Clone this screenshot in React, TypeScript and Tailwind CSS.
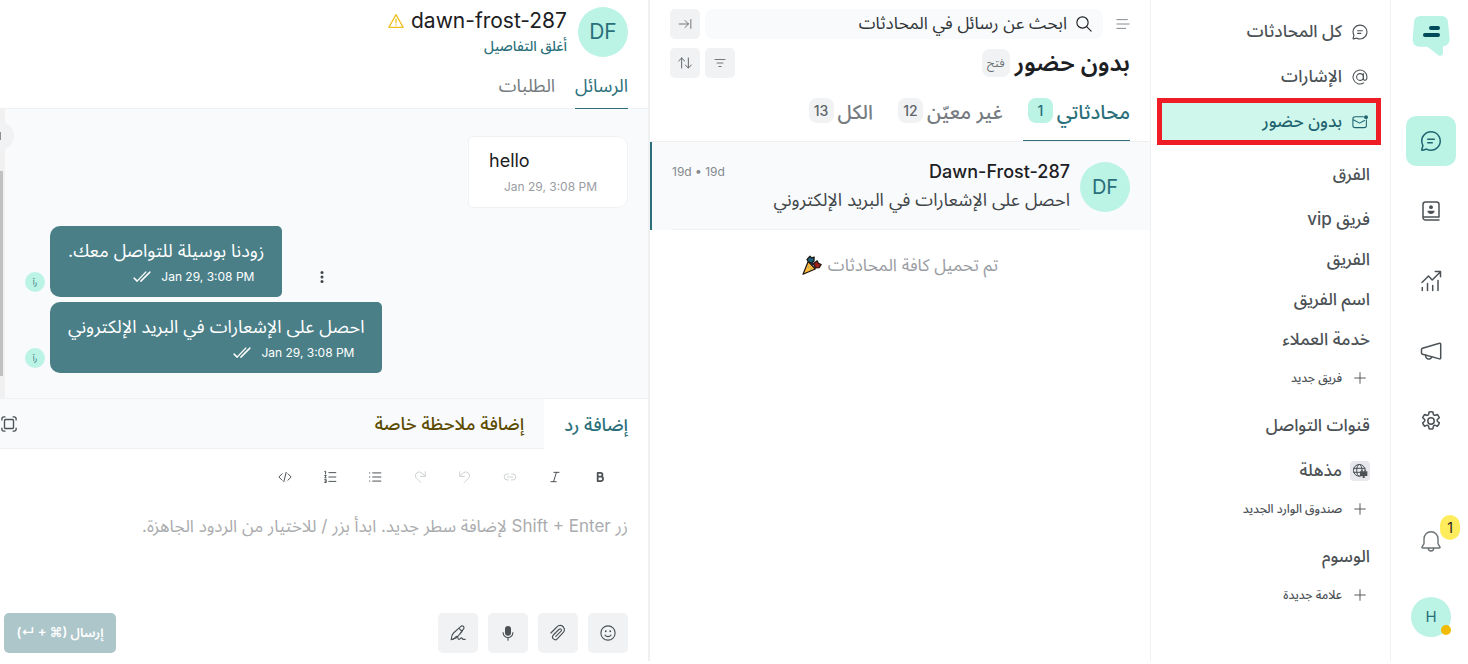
import type { ReactNode } from 'react';

type IconProps = { children: ReactNode; size?: string; className?: string; stroke?: string };

function Line({ children, size = 'size-5', className = '', stroke = '1.5' }: IconProps) {
  return (
    <svg
      viewBox="0 0 24 24"
      className={`${size} shrink-0 ${className}`}
      fill="none"
      stroke="currentColor"
      strokeWidth={stroke}
      strokeLinecap="round"
      strokeLinejoin="round"
      aria-hidden="true"
    >
      {children}
    </svg>
  );
}

function ChatIcon({ size }: { size: string }) {
  return (
    <svg viewBox="0 0 24 24" className={`${size} shrink-0`} fill="currentColor" aria-hidden="true">
      <path d="M12 2c5.523 0 10 4.477 10 10s-4.477 10-10 10a9.96 9.96 0 0 1-4.587-1.112l-3.826 1.067a1.25 1.25 0 0 1-1.54-1.54l1.068-3.823A9.96 9.96 0 0 1 2 12C2 6.477 6.477 2 12 2Zm0 1.5A8.5 8.5 0 0 0 3.5 12c0 1.47.373 2.883 1.073 4.137l.15.27-1.112 3.984 3.987-1.112.27.15A8.5 8.5 0 1 0 12 3.5ZM8.75 13h4.498a.75.75 0 0 1 .102 1.493l-.102.007H8.75a.75.75 0 0 1-.102-1.493L8.75 13Zm0-3.5h6.505a.75.75 0 0 1 .101 1.493l-.101.007H8.75a.75.75 0 0 1-.102-1.493L8.75 9.5Z" />
    </svg>
  );
}

function Logo() {
  return (
    <svg viewBox="0 0 38 42" className="h-[42px] w-[38px]" aria-hidden="true">
      <path
        d="M9 1h20c4.4 0 6.6 2.2 7 6.3l1.6 16c.4 4.5-2.1 7.6-6.6 8.2v6.2c0 3-2.8 4-5 2.2L15.5 31.7H8c-5 0-7.7-3-7.3-8L2 7.3C2.4 3.2 4.600 1 9 1Z"
        fill="#bbf3e5"
      />
      <rect x="17" y="11" width="11" height="4" rx="2" fill="#004b59" />
      <rect x="11" y="18" width="17" height="4" rx="2" fill="#004b59" />
    </svg>
  );
}

function PartyPopper() {
  return (
    <svg viewBox="0 0 20 20" className="size-5" role="img" aria-label="🎉" stroke="#1c1410" strokeWidth="1.2" strokeLinejoin="round">
      <path d="M6.200 6.500 1 19.300 13.300 14Z" fill="#fdb93a" />
      <path d="M5 4.500 8 1.200l1.500 1.600 2.700-.8-.2 4-2.500 2.200-3.200-1.500Z" fill="#1a6076" />
      <path d="m11.500 8.500 3.700-2.700 1.200 2.400 2.800 1.300-2 3.200-3.900.3Z" fill="#9d2018" />
      <path d="m9.500 7.500 2 2.700" fill="none" stroke="#2b2238" strokeWidth="2.2" />
      <circle cx="6.500" cy="12" r=".6" fill="#2aa5b5" stroke="none" />
      <circle cx="9" cy="14" r=".6" fill="#2aa5b5" stroke="none" />
    </svg>
  );
}

const book = (
  <Line size="size-6">
    <path d="M20 21H6.5A2.5 2.5 0 0 1 4 18.500v-13A2.5 2.5 0 0 1 6.500 3h11A2.5 2.5 0 0 1 20 5.500V18H4.600" />
    <circle cx="12" cy="8.2" r="1.9" fill="currentColor" stroke="none" />
    <path d="M8.500 11.700h7v.6c0 1.500-1.500 2.600-3.500 2.600s-3.500-1.100-3.500-2.600Z" fill="currentColor" stroke="none" />
  </Line>
);

const chart = (
  <Line size="size-6">
    <path d="M3 13.500 9.500 7l3.700 4L21 3.200M16.300 2.500H21.500V7.700M3.300 18.500v3M8.500 14.500v7M13.700 16.500v5M19 11.500v10" />
  </Line>
);

const megaphone = (
  <Line size="size-6">
    <path d="M21.700 5v14a.9.9 0 0 1-1.100.9L3.500 15.200a1.300 1.300 0 0 1-1-1.200v-3.400c0-.6.400-1.100 1-1.300l17-5.100a.9.9 0 0 1 1.200.8Z" />
    <path d="M6.800 16.200a3 3 0 0 0 6 1.500" />
  </Line>
);

const gear = (
  <Line size="size-6">
    <circle cx="12" cy="12" r="3.2" />
    <path d="M12 2.800c.7 0 1.300.1 1.900.2l.4 2c.2 1 1.200 1.500 2.100 1.200l2-.8a9 9 0 0 1 1.900 3.300l-1.600 1.400a1.500 1.500 0 0 0 0 2.400l1.600 1.400a9 9 0 0 1-1.900 3.300l-2-.8c-.9-.3-1.900.2-2.100 1.200l-.4 2.100a9 9 0 0 1-3.800 0l-.4-2.100c-.2-1-1.200-1.500-2.100-1.200l-2 .8a9 9 0 0 1-1.900-3.300l1.600-1.400a1.500 1.500 0 0 0 0-2.400L3.700 8.700a9 9 0 0 1 1.900-3.300l2 .8c.9.300 1.900-.2 2.100-1.200l.4-2c.6-.1 1.200-.2 1.900-.2Z" />
  </Line>
);

const bell = (
  <Line size="size-6" stroke="1.4">
    <path d="M12 2.700a7 7 0 0 0-7 7v5L3 18.200c-.2.500.1.800.6.800h16.800c.5 0 .8-.3.600-.8L19 14.700v-5a7 7 0 0 0-7-7ZM9.300 19.300a2.700 2.700 0 0 0 5.400 0" />
  </Line>
);

const at = (
  <Line size="size-[18px]" stroke="1.4">
    <circle cx="12" cy="12" r="4.5" />
    <path d="M16.500 7.500v6c0 1.800 1 2.800 2.400 2.800 1.700 0 2.400-1.600 2.400-4.300A9.300 9.300 0 1 0 17 19.900" />
  </Line>
);

const mail = (
  <Line size="size-[18px]" stroke="1.4">
    <path d="M16.500 5H5.500A3 3 0 0 0 2.500 8v8.500a3 3 0 0 0 3 3h12a3 3 0 0 0 3-3V9M3 9l8.500 4.500L18 10" />
    <circle cx="20" cy="5.5" r="2.6" fill="currentColor" stroke="none" />
  </Line>
);

const plus = (
  <Line size="size-4" stroke="1.4">
    <path d="M12 4v16M4 12h16" />
  </Line>
);

const globe = (
  <Line size="size-4" stroke="1.5">
    <circle cx="11" cy="11" r="8.8" />
    <ellipse cx="11" cy="11" rx="4" ry="8.8" />
    <path d="M2.500 8h17M2.500 14h9" />
    <path d="M12 12.500h11v7h-4v3h-3v-3h-4Z" fill="currentColor" stroke="none" />
  </Line>
);

function RailLink({ label, active, children }: { label: string; active?: boolean; children: ReactNode }) {
  return (
    <a
      href="#"
      aria-label={label}
      className={`flex size-[50px] items-center justify-center rounded-[10px] ${active ? 'bg-[#bbf3e5] text-[#1f6470]' : 'text-[#4b5155]'}`}
    >
      {children}
    </a>
  );
}

function SideRow({ icon, children, active }: { icon: ReactNode; children: ReactNode; active?: boolean }) {
  return (
    <a
      href="#"
      className={`flex h-10 items-center gap-2 rounded-[5px] pt-px pr-[10px] text-[17px] font-medium ${active ? 'bg-[#cff7ec] text-[#1f6470]' : 'text-[#4b5155]'}`}
    >
      <span className="flex w-5 justify-center">{icon}</span>
      {children}
    </a>
  );
}

function SideHeading({ children }: { children: ReactNode }) {
  return <h3 className="mt-2 flex h-10 items-center pt-px pr-[10px] text-[17px] font-medium text-[#4b5155]">{children}</h3>;
}

function AddRow({ children }: { children: ReactNode }) {
  return (
    <button type="button" className="flex h-[38px] w-full items-center gap-2 pr-[10px] text-[12px] font-medium text-[#4b5155]">
      <span className="flex w-5 justify-center">{plus}</span>
      {children}
    </button>
  );
}

function Rail() {
  return (
    <nav className="flex w-[78px] shrink-0 flex-col items-start border-l border-[#eff0f2] pr-3">
      <a href="#" aria-label="الرئيسية" className="flex h-[72px] w-[50px] items-center justify-center">
        <Logo />
      </a>
      <div className="mt-11 flex flex-col gap-5">
        <RailLink label="المحادثات" active>
          <ChatIcon size="size-6" />
        </RailLink>
        <RailLink label="جهات الاتصال">{book}</RailLink>
        <RailLink label="التقارير">{chart}</RailLink>
        <RailLink label="الحملات">{megaphone}</RailLink>
        <RailLink label="الإعدادات">{gear}</RailLink>
      </div>
      <div className="mt-auto flex flex-col items-center gap-[31px] pb-6">
        <a href="#" aria-label="الإشعارات" className="relative flex size-[50px] items-center justify-center text-[#6b7276]">
          {bell}
          <span className="absolute -top-px -right-1 flex h-[25px] w-5 items-center justify-center rounded-full bg-[#ffec5c] text-[14px] text-[#1c2023]">
            1
          </span>
        </a>
        <button type="button" aria-label="الملف الشخصي" className="relative flex size-10 items-center justify-center rounded-full bg-[#bbf3e5] text-[15px] text-[#2a6f7a]">
          H
          <span className="absolute right-0 bottom-0.5 size-[10px] rounded-full bg-[#f0bb00]" />
        </button>
      </div>
    </nav>
  );
}

function SidePanel() {
  return (
    <aside className="w-60 shrink-0 border-l border-[#eff0f2] px-[10px] pt-[11px]">
      <div className="flex flex-col gap-[5px]">
        <SideRow icon={<ChatIcon size="size-[18px]" />}>كل المحادثات</SideRow>
        <SideRow icon={at}>الإشارات</SideRow>
        <div className="relative">
          <SideRow icon={mail} active>
            بدون حضور
          </SideRow>
          <span className="pointer-events-none absolute -top-[3px] -right-px -left-1 h-[47px] border-[5px] border-[#ee1c25]" />
        </div>
      </div>
      <div className="pt-[5px]">
        <SideHeading>الفرق</SideHeading>
        <ul className="pt-[5px]">
          {['فريق vip', 'الفريق', 'اسم الفريق', 'خدمة العملاء'].map((team) => (
            <li key={team}>
              <a href="#" className="flex h-10 items-center pt-px pr-[10px] text-[17px] font-medium text-[#4b5155]">
                {team}
              </a>
            </li>
          ))}
        </ul>
        <AddRow>فريق جديد</AddRow>
      </div>
      <SideHeading>قنوات التواصل</SideHeading>
      <div className="pt-[5px]">
        <SideRow icon={<span className="flex size-5 items-center justify-center rounded-sm bg-[#e6e8eb]">{globe}</span>}>مذهلة</SideRow>
        <AddRow>صندوق الوارد الجديد</AddRow>
      </div>
      <SideHeading>الوسوم</SideHeading>
      <AddRow>علامة جديدة</AddRow>
    </aside>
  );
}

function SquareButton({ label, children }: { label: string; children: ReactNode }) {
  return (
    <button type="button" aria-label={label} className="flex size-[30px] shrink-0 items-center justify-center rounded-[5px] bg-[#f1f2f4] text-[#5f666a]">
      {children}
    </button>
  );
}

function ListTab({ label, count, active }: { label: string; count: string; active?: boolean }) {
  return (
    <button
      type="button"
      className={`flex h-[62px] items-center gap-1 border-b pt-[2px] pl-[5px] text-[20px] font-medium ${active ? 'border-[#2a6f7a] text-[#2a6f7a]' : 'border-transparent text-[#757b80]'}`}
    >
      <span className="pt-[3px]">{label}</span>
      <span className={`flex size-[25px] items-center justify-center rounded-lg text-[14px] ${active ? 'bg-[#bbf3e5]' : 'bg-[#f1f2f4] text-[#5f666a]'}`}>
        {count}
      </span>
    </button>
  );
}

function ChatList() {
  return (
    <section className="w-[500px] shrink-0">
      <header className="flex items-center gap-[5px] px-5 pt-[9px]">
        <button type="button" aria-label="القائمة" className="ml-2 text-[#757b80]">
          <Line size="size-[14px]">
            <path d="M1.500 4.500h18M1.500 12h21M1.500 19.500h15" />
          </Line>
        </button>
        <label className="flex h-[30px] flex-1 items-center gap-2 rounded-lg bg-[#f8fafc] px-[10px] text-[#1c2023]">
          <Line size="size-[18px]">
            <circle cx="10" cy="10" r="7.5" />
            <path d="m15.500 15.500 6 6" />
          </Line>
          <input
            type="text"
            aria-label="بحث"
            placeholder="ابحث عن رسائل في المحادثات"
            className="min-w-0 flex-1 bg-transparent text-[17px] outline-none placeholder:text-[#2f3437]"
          />
        </label>
        <SquareButton label="طي">
          <Line size="size-[14px]">
            <path d="M2 12h16M12 6l6 6-6 6M22 4.500v15" />
          </Line>
        </SquareButton>
      </header>
      <div className="flex items-center gap-[5px] px-5 pt-2">
        <h1 className="text-[24px] leading-8 font-semibold text-[#1c2023]">بدون حضور</h1>
        <span className="flex size-7 items-center justify-center rounded-lg bg-[#f1f2f4] text-[12px] text-[#6b7276]">فتح</span>
        <div className="mr-auto flex gap-[5px]">
          <SquareButton label="تصفية">
            <Line size="size-[14px]">
              <path d="M3.500 6h17M7 12h10M10 18h4" />
            </Line>
          </SquareButton>
          <SquareButton label="ترتيب">
            <Line size="size-4">
              <path d="M7 19.500v-15M2.500 9 7 4.500 11.500 9M17 4.500v15M12.500 15l4.500 4.500 4.500-4.500" />
            </Line>
          </SquareButton>
        </div>
      </div>
      <div className="flex gap-5 border-b border-[#eff0f2] pr-5">
        <ListTab label="محادثاتي" count="1" active />
        <ListTab label="غير معيّن" count="12" />
        <ListTab label="الكل" count="13" />
      </div>
      <a href="#" className="flex h-[88px] border-l-2 border-[#2a6f7a] bg-[#f8fafc] px-5">
        <span className="mt-5 flex size-[50px] shrink-0 items-center justify-center rounded-full bg-[#bbf3e5] text-[20px] text-[#2a6f7a]">DF</span>
        <span className="flex flex-1 flex-col border-b border-[#eff0f2] pt-4 pr-[10px]">
          <span className="flex items-center justify-between">
            <span className="text-[18px] leading-7 font-medium text-[#1c2023]">
              <bdi>Dawn-Frost-287</bdi>
            </span>
            <span dir="ltr" className="text-[12px] text-[#85898c]">
              19d • 19d
            </span>
          </span>
          <span className="text-[18px] leading-7 text-[#3f4548]">احصل على الإشعارات في البريد الإلكتروني</span>
        </span>
      </a>
      <p className="flex items-center justify-center gap-[6px] pt-[21px] text-[17px] leading-7 text-[#999ca3]">
        تم تحميل كافة المحادثات <PartyPopper />
      </p>
    </section>
  );
}

function Bubble({ text, initials, menu }: { text: string; initials: string; menu?: boolean }) {
  return (
    <div className="flex items-end justify-end">
      {menu && (
        <button type="button" aria-label="خيارات" className="mb-[10px] ml-[30px] text-[#3f4548]">
          <svg viewBox="0 0 20 20" className="size-5" fill="currentColor" aria-hidden="true">
            <circle cx="10" cy="5.5" r="1.5" />
            <circle cx="10" cy="10" r="1.5" />
            <circle cx="10" cy="14.5" r="1.5" />
          </svg>
        </button>
      )}
      <div className="flex h-[71px] flex-col rounded-[5px] rounded-l-[10px] bg-[#4a7f88] px-[18px] pt-[11px] text-white">
        <p className="text-[18px] leading-7">{text}</p>
        <div className="flex items-center gap-[10px] pr-[10px] text-[12px] leading-6">
          <time dir="ltr">Jan 29, 3:08 PM</time>
          <Line size="size-[18px]" stroke="1.9">
            <path d="m1.500 13.500 4 4L17 5.500M10.500 17.500 22.500 5.500" />
          </Line>
        </div>
      </div>
      <span className="mr-[5px] mb-[5px] flex size-5 shrink-0 items-center justify-center rounded-full bg-[#bbf3e5] text-[8px] text-[#2a6f7a]">{initials}</span>
    </div>
  );
}

const tools: { label: string; faded?: boolean; icon: ReactNode }[] = [
  { label: 'غامق', icon: <path d="M8 5h5a3.200 3.200 0 0 1 0 6.500H8Zm0 6.500h5.500a3.600 3.600 0 0 1 0 7.500H8Z" strokeWidth="3" /> },
  { label: 'مائل', icon: <path d="M10 4h9M5 20h9M14.500 4l-5 16" /> },
  { label: 'رابط', faded: true, icon: <path d="M9.500 7H7a5 5 0 0 0 0 10h2.500M14.500 7H17a5 5 0 0 1 0 10h-2.500M7.500 12h9" /> },
  { label: 'تراجع', faded: true, icon: <path d="M3 3v8h8M3.500 10.500 9 5a6.500 6.500 0 0 1 10 8l-8.500 8.500" /> },
  { label: 'إعادة', faded: true, icon: <path d="M21 3v8h-8M20.500 10.500 15 5a6.500 6.500 0 0 0-10 8l8.500 8.500" /> },
  { label: 'قائمة نقطية', icon: <path d="M8 5h14M8 12h14M8 19h14M2.500 5h.5M2.500 12h.5M2.500 19h.5" /> },
  { label: 'قائمة مرقمة', icon: <path d="M10 4.500h12M10 12h12M10 19.500h12M3 2.500l1.500-.5v5M3 9.500h2.500L3 13.500h2.500M3 16.500h2.500v5H3M3.500 19h2" /> },
  { label: 'شيفرة', icon: <path d="M7 6.500 1.500 12 7 17.500M17 6.500l5.500 5.500-5.500 5.500M14 4l-4 16" /> },
];

const actions: { label: string; icon: ReactNode }[] = [
  {
    label: 'رموز تعبيرية',
    icon: (
      <>
        <circle cx="12" cy="12" r="9.5" />
        <path d="M8 14.800c2 2.700 6 2.700 8 0" />
        <path d="M9 9.500v.3M15 9.500v.3" strokeWidth="2.4" />
      </>
    ),
  },
  {
    label: 'إرفاق ملف',
    icon: <path d="m2.500 12 8-8a5.500 5.500 0 0 1 9 .5c1.700 2.500 1.200 5-.7 7L11 19.700a3.600 3.600 0 0 1-5.300-5L13.500 7a1.800 1.800 0 0 1 2.600 2.500L9 16.500" />,
  },
  {
    label: 'تسجيل صوتي',
    icon: (
      <>
        <rect x="8" y="2.5" width="8" height="13" rx="4" fill="currentColor" stroke="none" />
        <path d="M5.500 11.500a6.500 6.500 0 0 0 13 0M12 18.200v3.500" />
      </>
    ),
  },
  {
    label: 'توقيع',
    icon: (
      <>
        <path d="M15.500 3.500a2.500 2.500 0 0 1 4 3l-8 10.500c-1.500 2-4.500 3-8.500 3.500 0-4 1-6.500 3-8.500ZM14 6.500l3.500 3.500-3 3.500" />
        <path d="M3 21c4 0 5-4 7.500-4.500 2-.3.500 4 2.500 4s2-2 3.500-2 1 2 2.500 2h2.500" />
      </>
    ),
  },
];

function Conversation() {
  return (
    <main className="flex min-w-0 flex-1 flex-col border-r-2 border-[#eff0f2]">
      <header className="border-b border-[#eff0f2] pr-5">
        <div className="flex gap-[11px] pt-[7px]">
          <span className="flex size-[50px] shrink-0 items-center justify-center rounded-full bg-[#bbf3e5] text-[21px] text-[#2a6f7a]">DF</span>
          <div className="flex flex-col items-start">
            <div className="flex items-center gap-[6px]">
              <h2 className="text-[21px] leading-7 text-[#1c2023]">
                <bdi>dawn-frost-287</bdi>
              </h2>
              <Line size="size-[18px]" stroke="1.7" className="text-[#f0c020]">
                <path d="M12 3.500 2.500 20.500h19ZM12 9.500v5M12 17.300v.2" />
              </Line>
            </div>
            <button type="button" className="text-[14px] leading-[22px] font-medium text-[#2a6f7a]">
              أغلق التفاصيل
            </button>
          </div>
        </div>
        <div className="-mb-px flex gap-5 pt-[6px] text-[18px]">
          <button type="button" className="h-[46px] border-b border-[#2a6f7a] text-[#2a6f7a]">
            الرسائل
          </button>
          <button type="button" className="h-[46px] border-b border-transparent text-[#757b80]">
            الطلبات
          </button>
        </div>
      </header>

      <div className="relative flex flex-1 flex-col bg-[#f8fafc] pt-[27px] pr-5 pb-[25px] pl-[25px]">
        <span className="absolute top-0 bottom-0 left-0 w-[5px] bg-[#f1f1f1]">
          <span className="absolute top-[62px] left-0 h-[205px] w-[3px] bg-[#c1c1c1]" />
        </span>
        <span className="absolute top-[13px] left-0 flex h-7 w-[14px] items-center justify-end rounded-r-full bg-[#f1f2f4]">
          <span className="h-2 w-px bg-[#8b9094]" />
        </span>
        <div className="h-[72px] w-[160px] rounded-[5px] rounded-r-[10px] border border-[#f1f2f4] bg-white px-5 pt-[10px]">
          <p dir="ltr" className="text-[18px] leading-7 text-[#1c2023]">
            hello
          </p>
          <time dir="ltr" className="block pr-[10px] text-right text-[12px] leading-6 text-[#999ca3]">
            Jan 29, 3:08 PM
          </time>
        </div>
        <div className="mt-[18px] flex flex-col gap-[5px]">
          <Bubble text="زودنا بوسيلة للتواصل معك." initials="رآ" menu />
          <Bubble text="احصل على الإشعارات في البريد الإلكتروني" initials="رآ" />
        </div>
      </div>

      <div className="border-t border-[#eff0f2] bg-white">
        <div className="flex h-[50px] items-stretch border-b border-[#eff0f2] bg-[#f8fafc] text-[18px] font-medium">
          <button type="button" className="-mb-px bg-white px-5 text-[#2a6f7a]">
            إضافة رد
          </button>
          <button type="button" className="px-5 text-[#5c4a00]">
            إضافة ملاحظة خاصة
          </button>
          <button type="button" aria-label="تكبير" className="mr-auto text-[#4b5155]">
            <Line size="size-[18px]" stroke="1.8">
              <rect x="6" y="6" width="12" height="12" rx="1.5" />
              <path d="M2.500 6.500V5A2.500 2.500 0 0 1 5 2.500h1.500M17.500 2.500H19A2.500 2.500 0 0 1 21.500 5v1.500M21.500 17.500V19a2.500 2.500 0 0 1-2.500 2.500h-1.500M6.500 21.500H5A2.500 2.500 0 0 1 2.500 19v-1.500" />
            </Line>
          </button>
        </div>
        <div className="flex gap-[15px] pt-[13px] pr-[33px]">
          {tools.map((tool) => (
            <button
              key={tool.label}
              type="button"
              aria-label={tool.label}
              className={`flex size-[30px] items-center justify-center ${tool.faded ? 'text-[#cdd0d2]' : 'text-[#4b5155]'}`}
            >
              <Line size="size-[14px]" stroke="1.7">
                {tool.icon}
              </Line>
            </button>
          ))}
        </div>
        <textarea
          aria-label="الرد"
          placeholder="زر Shift + Enter لإضافة سطر جديد. ابدأ بزر / للاختيار من الردود الجاهزة."
          className="mt-5 block h-[90px] w-full resize-none bg-transparent px-5 text-[17px] leading-7 outline-none placeholder:text-[#aaacae]"
        />
        <div className="flex items-center gap-[10px] pt-[11px] pr-5 pb-2 pl-1">
          {actions.map((action) => (
            <button key={action.label} type="button" aria-label={action.label} className="flex size-10 items-center justify-center rounded-[5px] bg-[#f1f2f4] text-[#4b5155]">
              <Line size="size-[18px]">{action.icon}</Line>
            </button>
          ))}
          <button type="button" className="mr-auto flex h-10 w-28 items-center justify-center rounded-[5px] bg-[#adc6ca] text-[13px] font-semibold text-white">
            إرسال (⌘ + ↵)
          </button>
        </div>
      </div>
    </main>
  );
}

export default function App() {
  return (
    <div dir="rtl" lang="ar" className="flex min-h-screen bg-white pb-[3px] font-['Inter','Noto_Sans_Arabic','Noto_Sans',sans-serif]">
      <Rail />
      <SidePanel />
      <ChatList />
      <Conversation />
    </div>
  );
}
